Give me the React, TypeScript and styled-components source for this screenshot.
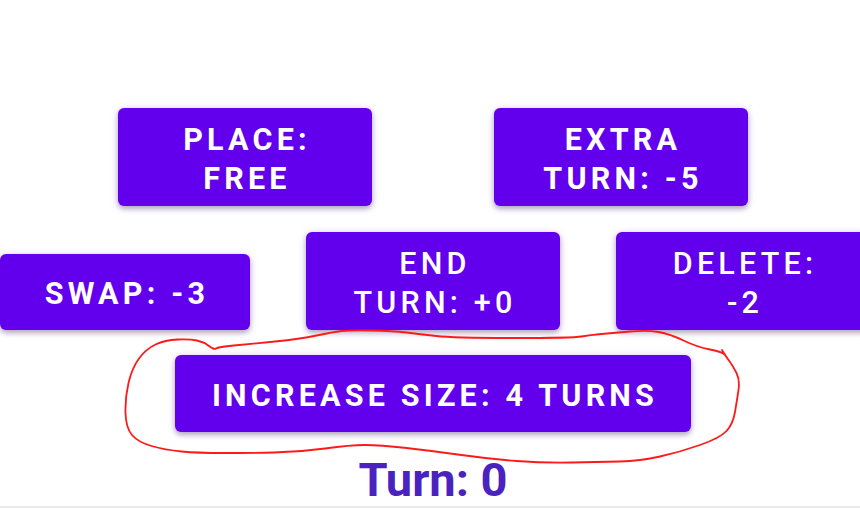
import React from "react";
import styled, { createGlobalStyle } from "styled-components";

const GlobalStyle = createGlobalStyle`
    html, body {
        margin: 0;
        padding: 0;
        background: #ffffff;
        overflow: hidden;
    }
    body {
        font-family: Roboto, "Liberation Sans", sans-serif;
    }
`;

type Action = {
    lines: string[];
    width: number;
    height: number;
    weight: number;
};

const topRow: Action[] = [
    { lines: ["PLACE:", "FREE"], width: 254, height: 98, weight: 700 },
    { lines: ["EXTRA", "TURN: -5"], width: 254, height: 98, weight: 700 },
];

const midRow: Action[] = [
    { lines: ["SWAP: -3"], width: 250, height: 76, weight: 700 },
    { lines: ["END", "TURN: +0"], width: 254, height: 98, weight: 500 },
    { lines: ["DELETE:", "-2"], width: 254, height: 98, weight: 500 },
];

// hand drawn red loop around the increase button
const loop: [number, number][] = [
    [722, 350], [727, 358], [733, 366], [740, 380], [737, 400], [733, 424], [720, 438],
    [680, 452], [640, 461], [600, 462], [543, 463], [490, 459], [433, 451], [380, 445],
    [350, 445], [300, 452], [248, 453], [198, 453], [165, 450], [138, 442], [126, 428],
    [125, 398], [132, 368], [146, 349], [165, 340], [190, 339], [204, 342], [214, 350],
    [218, 347], [250, 344], [300, 339], [333, 332], [350, 330], [393, 331], [420, 334],
    [453, 338], [573, 338], [590, 335], [613, 333], [647, 330], [670, 334], [697, 347],
    [723, 352], [727, 358],
];

const smoothPath = (pts: [number, number][]) => {
    let d = `M ${pts[0][0]} ${pts[0][1]}`;
    for (let i = 1; i < pts.length - 1; i++) {
        const [x, y] = pts[i];
        const mx = (x + pts[i + 1][0]) / 2;
        const my = (y + pts[i + 1][1]) / 2;
        d += ` Q ${x} ${y} ${mx} ${my}`;
    }
    const last = pts[pts.length - 1];
    return `${d} L ${last[0]} ${last[1]}`;
};

const App: React.FC = () => {
    const renderBtn = (a: Action) => (
        <ActionBtn key={a.lines.join(" ")} w={a.width} h={a.height} weight={a.weight}>
            {a.lines.map((l) => <span key={l}>{l}</span>)}
        </ActionBtn>
    );

    return (
        <Page>
            <GlobalStyle />
            <TopRow>{topRow.map(renderBtn)}</TopRow>
            <MidRow>{midRow.map(renderBtn)}</MidRow>
            <BottomRow>
                <ActionBtn w={516} h={77} weight={700}>
                    <span>INCREASE SIZE: 4 TURNS</span>
                </ActionBtn>
            </BottomRow>
            <TurnLabel>Turn: 0</TurnLabel>
            <Scribble viewBox="0 0 860 508" width={860} height={508}>
                <path
                    d={smoothPath(loop)}
                    fill="none"
                    stroke="#ff1a1a"
                    strokeWidth={1.8}
                    strokeLinejoin="round"
                    strokeLinecap="round"
                />
            </Scribble>
        </Page>
    );
};

const Page = styled.div`
    position: relative;
    width: 860px;
    height: 508px;
    overflow: hidden;
    display: flex;
    flex-direction: column;
    background: #ffffff;
    border-bottom: 2px solid #ececec;
    box-sizing: border-box;
`;

const ActionBtn = styled.button<{ w: number; h: number; weight: number }>`
    flex: none;
    width: ${({ w }) => w}px;
    height: ${({ h }) => h}px;
    display: flex;
    flex-direction: column;
    align-items: center;
    justify-content: center;
    background: #6200ee;
    color: #ffffff;
    border: none;
    border-radius: 6px;
    box-shadow: 0 3px 5px rgba(0, 0, 0, 0.24), 0 1px 8px rgba(98, 0, 238, 0.2);
    font-family: Roboto, "Liberation Sans", sans-serif;
    font-size: 30.5px;
    font-weight: ${({ weight }) => weight};
    letter-spacing: 4.2px;
    line-height: 39px;
    padding: 3px 0 0 4px;
    span {
        white-space: nowrap;
    }
`;

const TopRow = styled.div`
    display: flex;
    gap: 122px;
    padding: 108px 0 0 118px;
`;

const MidRow = styled.div`
    display: flex;
    align-items: flex-end;
    gap: 56px;
    margin-top: 26px;
`;

const BottomRow = styled.div`
    display: flex;
    padding-left: 175px;
    margin-top: 25px;
`;

const TurnLabel = styled.div`
    width: 866px;
    margin-top: 22px;
    text-align: center;
    font-family: Roboto, "Liberation Sans", sans-serif;
    font-weight: 700;
    font-size: 47px;
    line-height: 52px;
    color: #4a22c0;
`;

const Scribble = styled.svg`
    position: absolute;
    top: 0;
    left: 0;
    pointer-events: none;
`;

export default App;
